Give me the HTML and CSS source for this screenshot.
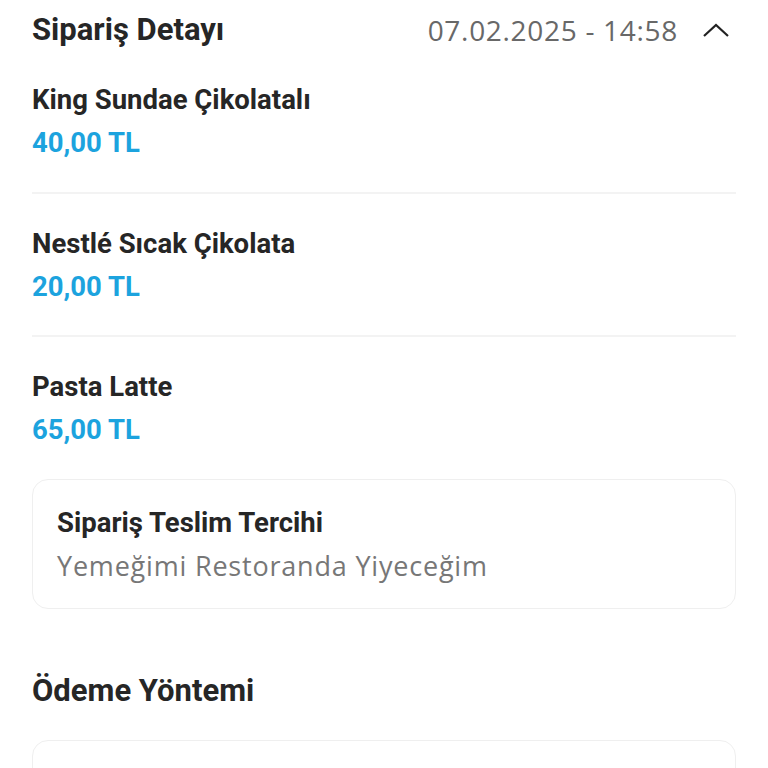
FILE: index.html
```html
<!DOCTYPE html>
<html lang="tr">
<head>
  <meta charset="UTF-8">
  <title>Sipariş Detayı</title>
  <link rel="stylesheet" href="styles.css">
</head>
<body>

  <div class="sayfa">
    <div class="baslik-satir">
      <h2 class="baslik">Sipariş Detayı</h2>
      <div class="tarih-kutu">
        <span class="tarih">07.02.2025 - 14:58</span>
        <svg class="ok" width="28" height="16" viewBox="0 0 28 16">
          <polyline points="2,14 14,3 26,14" fill="none" stroke="#222" stroke-width="2.2"/>
        </svg>
      </div>
    </div>

    <div class="urunler">
      <div class="urun">
        <div class="urun-ad">King Sundae Çikolatalı</div>
        <div class="urun-fiyat">40,00 TL</div>
      </div>
      <div class="urun">
        <div class="urun-ad">Nestlé Sıcak Çikolata</div>
        <div class="urun-fiyat">20,00 TL</div>
      </div>
      <div class="urun">
        <div class="urun-ad">Pasta Latte</div>
        <div class="urun-fiyat">65,00 TL</div>
      </div>
    </div>

    <div class="kart">
      <div class="kart-baslik">Sipariş Teslim Tercihi</div>
      <div class="kart-metin">Yemeğimi Restoranda Yiyeceğim</div>
    </div>

    <h2 class="baslik odeme-baslik">Ödeme Yöntemi</h2>

    <div class="kart kart-odeme"></div>
  </div>

</body>
</html>
```

FILE: styles.css
```css
body {
  margin: 0;
  font-family: Roboto, "Liberation Sans", sans-serif;
  background: #fff;
  color: #262626;
}
.sayfa {
  padding: 0 32px;
}
.baslik-satir {
  display: flex;
  justify-content: space-between;
  align-items: center;
  padding: 11px 0 1px;
}
.baslik {
  margin: 0;
  font-size: 31px;
  line-height: 34px;
  font-weight: 700;
  color: #262626;
}
.tarih-kutu {
  display: flex;
  align-items: center;
  gap: 24px;
}
.tarih {
  font-family: "Open Sans", sans-serif;
  font-size: 28px;
  letter-spacing: 0.7px;
  color: #686868;
}
.ok {
  margin-right: 6px;
}
.urun {
  padding: 34px 0 32.5px;
  border-bottom: 2px solid #f3f3f3;
}
.urun:last-child {
  border-bottom: none;
  padding-bottom: 33px;
}
.urun-ad {
  font-size: 27.5px;
  line-height: 32px;
  font-weight: 700;
}
.urun-fiyat {
  margin-top: 11px;
  font-size: 27.5px;
  line-height: 32px;
  font-weight: 700;
  color: #1ca3de;
}
.kart {
  border: 1px solid #efefef;
  border-radius: 16px;
  padding: 27px 24px 26px;
}
.kart-baslik {
  font-size: 27.5px;
  line-height: 32px;
  font-weight: 700;
}
.kart-metin {
  margin-top: 11px;
  font-family: "Open Sans", sans-serif;
  font-size: 27px;
  letter-spacing: 0.8px;
  line-height: 32px;
  color: #777;
}
.odeme-baslik {
  margin-top: 65px;
}
.kart-odeme {
  margin-top: 32px;
  height: 80px;
  padding: 0;
}
```
